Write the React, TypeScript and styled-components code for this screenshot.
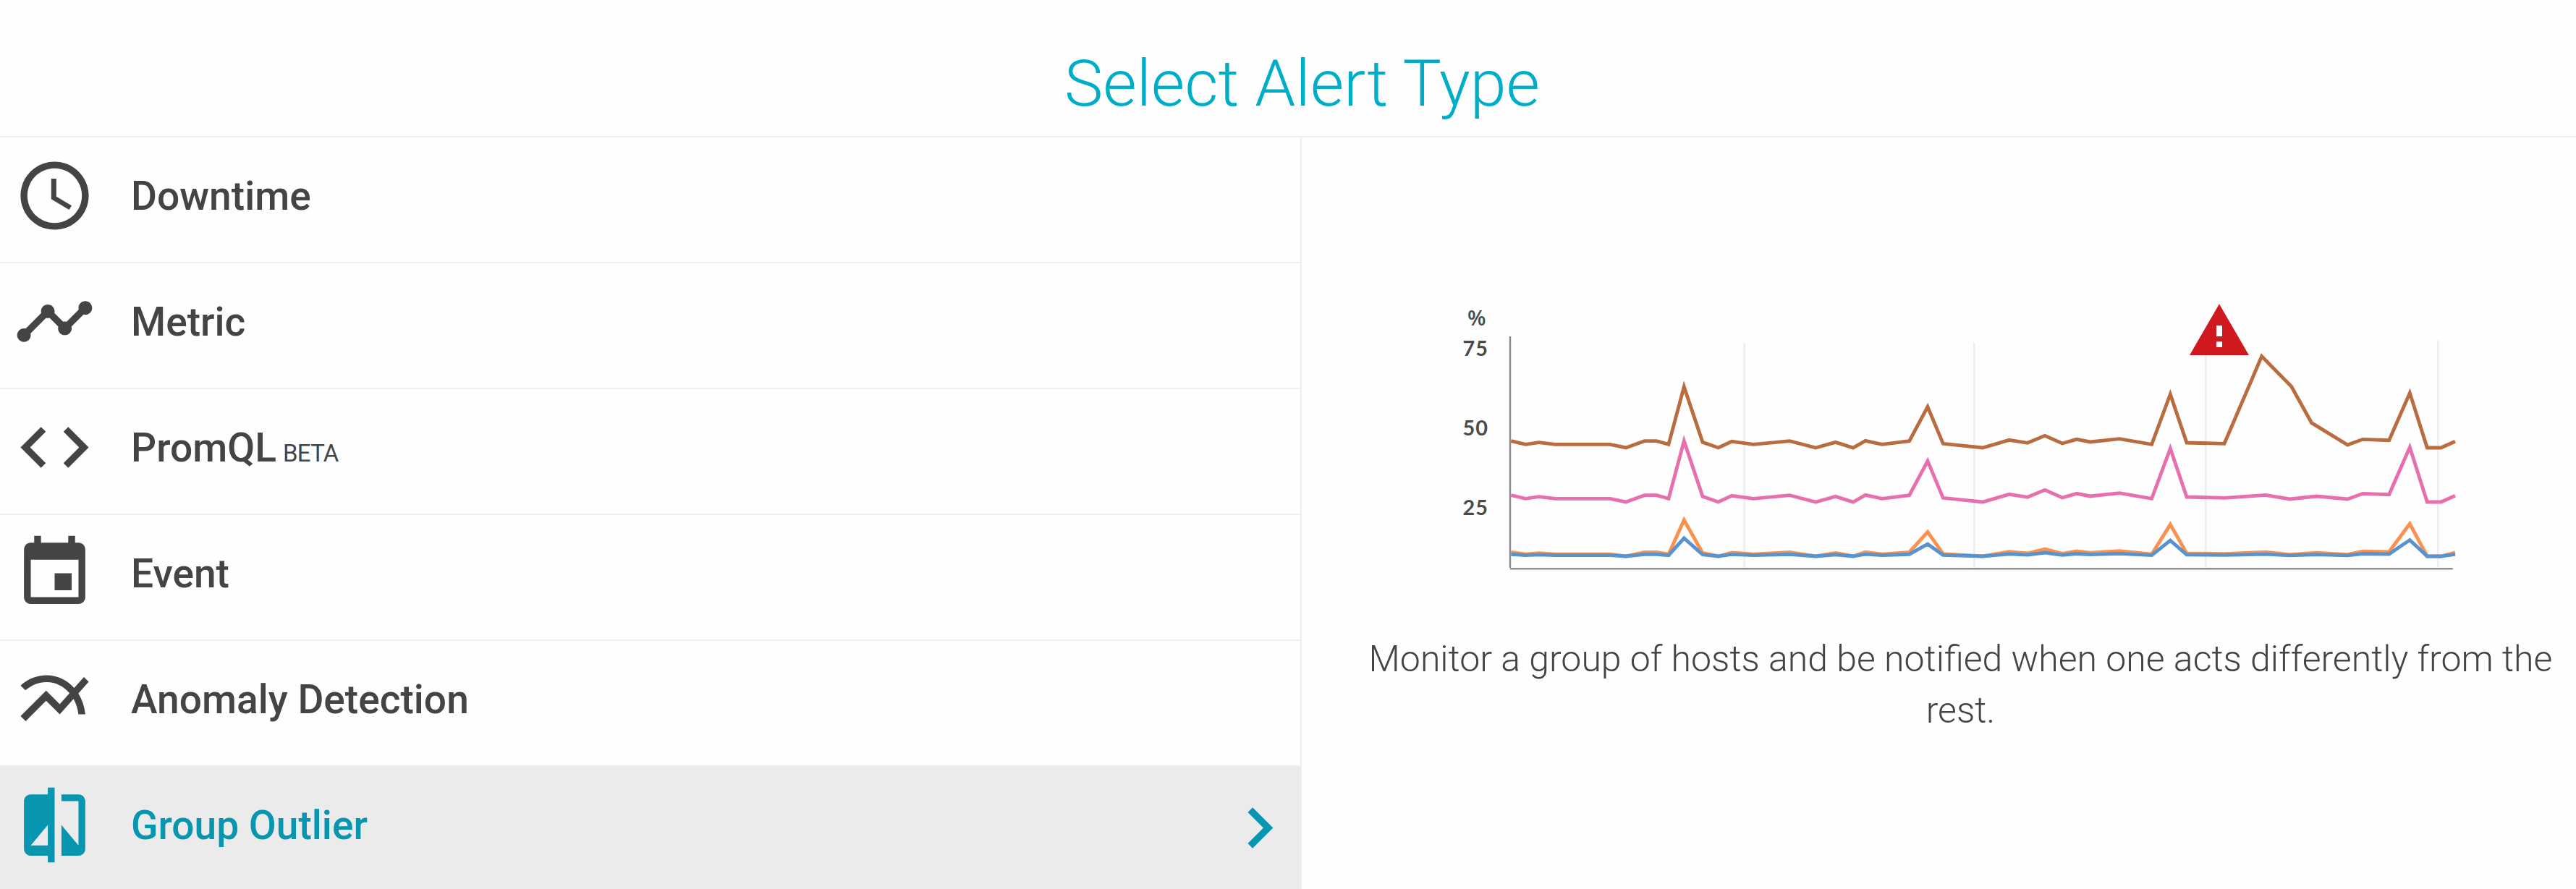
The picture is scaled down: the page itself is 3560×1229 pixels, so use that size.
import React from "react";
import styled, { createGlobalStyle } from "styled-components";

const GlobalStyle = createGlobalStyle`
  body {
    margin: 0;
    background: #fefefe;
    font-family: Roboto, "Liberation Sans", sans-serif;
    color: #434445;
  }
`;

const Page = styled.main`
  display: flex;
  flex-direction: column;
  width: 3560px;
  height: 1229px;
  overflow: hidden;
`;

const Header = styled.header`
  box-sizing: border-box;
  height: 190px;
  padding: 63px 0 0 39px;
  border-bottom: 2px solid #eeeeee;
`;

const Title = styled.h1`
  margin: 0;
  font-size: 89.8px;
  font-weight: 300;
  line-height: 106px;
  text-align: center;
  color: #00adc9;
`;

const Columns = styled.div`
  display: grid;
  grid-template-columns: 1799px 1fr;
  height: 1039px;
`;

const TypeList = styled.ul`
  margin: 0;
  padding: 0;
  list-style: none;
  border-right: 2px solid #eeeeee;
`;

const TypeItem = styled.li<{ $selected: boolean }>`
  box-sizing: border-box;
  display: flex;
  align-items: flex-start;
  height: 174px;
  padding: 24px 0 0 19px;
  border-bottom: 2px solid #eeeeee;
  background: ${(p) => (p.$selected ? "#ebebeb" : "transparent")};
  color: ${(p) => (p.$selected ? "#0795b0" : "inherit")};
`;

const Icon = styled.svg`
  flex: none;
  width: 113px;
  height: 113px;
  fill: currentColor;
`;

const Chevron = styled(Icon)`
  margin: 4px 0 0 auto;
`;

const Label = styled.span`
  margin-left: 49px;
  font-size: 55.1px;
  font-weight: 500;
  line-height: 115px;
  white-space: nowrap;
`;

const Beta = styled.small`
  margin-left: 9px;
  font-size: 33px;
  font-weight: 450;
  letter-spacing: -0.7px;
`;

const Preview = styled.section`
  display: flex;
  flex-direction: column;
  padding: 210px 19px 0 79px;
`;

const Chart = styled.svg`
  display: block;
  width: 1420px;
  height: 400px;
  margin-left: 102px;
`;

const Description = styled.p`
  margin: 76px 0 0;
  font-size: 50px;
  font-weight: 300;
  line-height: 71px;
  text-align: center;
`;

const AxisLabel = styled.text`
  font-family: Lato, sans-serif;
  font-size: 28.8px;
  font-weight: 700;
  letter-spacing: 1px;
  fill: #4a4b4c;
  text-anchor: end;
`;

const UnitLabel = styled.text`
  font-family: "Open Sans", sans-serif;
  font-size: 29.5px;
  font-weight: 600;
  fill: #4a4b4c;
`;

const alertTypes = [
  {
    name: "Downtime",
    icon: "M11.99 2C6.47 2 2 6.48 2 12s4.47 10 9.99 10C17.52 22 22 17.52 22 12S17.52 2 11.99 2zM12 20c-4.42 0-8-3.58-8-8s3.58-8 8-8 8 3.58 8 8-3.58 8-8 8zm.5-13H11v6l5.25 3.15.75-1.23-4.5-2.67z",
  },
  {
    name: "Metric",
    icon: "M23 8c0 1.1-.9 2-2 2-.18 0-.35-.02-.51-.07l-3.56 3.55c.05.16.07.34.07.52 0 1.1-.9 2-2 2s-2-.9-2-2c0-.18.02-.36.07-.52l-2.55-2.55c-.16.05-.34.07-.52.07s-.36-.02-.52-.07l-4.55 4.56c.05.16.07.33.07.51 0 1.1-.9 2-2 2s-2-.9-2-2 .9-2 2-2c.18 0 .35.02.51.07l4.56-4.55C8.02 9.36 8 9.18 8 9c0-1.1.9-2 2-2s2 .9 2 2c0 .18-.02.36-.07.52l2.55 2.55c.16-.05.34-.07.52-.07s.36.02.52.07l3.55-3.56C19.02 8.35 19 8.18 19 8c0-1.1.9-2 2-2s2 .9 2 2z",
  },
  {
    name: "PromQL",
    beta: true,
    icon: "M9.4 16.6L4.8 12l4.6-4.6L8 6l-6 6 6 6 1.4-1.4zm5.2 0l4.6-4.6-4.6-4.6L16 6l6 6-6 6-1.4-1.4z",
  },
  {
    name: "Event",
    icon: "M17 12h-5v5h5v-5zM16 1v2H8V1H6v2H5c-1.11 0-1.99.9-1.99 2L3 19c0 1.1.89 2 2 2h14c1.1 0 2-.9 2-2V5c0-1.1-.9-2-2-2h-1V1h-2zm3 18H5V8h14v11z",
  },
  {
    name: "Anomaly Detection",
    icon: "M22 6.92l-1.41-1.41-2.85 3.21C15.68 6.4 12.83 5 9.61 5 6.72 5 4.07 6.16 2 8l1.42 1.42C5.12 7.93 7.27 7 9.61 7c2.74 0 5.09 1.26 6.77 3.24l-2.88 3.24-4-4L2 16.99l1.5 1.5 6-6.01 4 4 4.05-4.55c.75 1.35 1.25 2.9 1.44 4.55H21c-.22-2.3-.95-4.39-2.04-6.14L22 6.92z",
  },
  {
    name: "Group Outlier",
    selected: true,
    icon: "M10 3H5c-1.1 0-2 .9-2 2v14c0 1.1.9 2 2 2h5v2h2V1h-2v2zm0 15H5l5-6v6zm9-15h-5v2h5v13l-5-6v9h5c1.1 0 2-.9 2-2V5c0-1.1-.9-2-2-2z",
  },
];

type Point = [number, number];

// Host load samples in chart units (one third of a pixel).
const lead: Point[] = [
  [325, 629], [385, 643], [440, 635], [508, 643], [735, 643], [801, 657],
  [878, 629], [928, 629], [978, 643], [1042, 404], [1119, 634], [1184, 657],
  [1240, 631], [1330, 643], [1480, 629], [1588, 657], [1670, 634], [1743, 657],
  [1794, 628], [1863, 643], [1976, 629], [2052, 487], [2116, 640], [2280, 657],
  [2390, 625], [2466, 637], [2538, 607], [2610, 639], [2670, 622], [2726, 633],
  [2847, 620], [2981, 643], [3058, 435], [3126, 636],
];
const usual: Point[] = [[3284, 640], [3453, 628], [3553, 645], [3665, 633]];
const outlier: Point[] = [[3282, 640], [3437, 278], [3560, 403], [3644, 554]];
const tail: Point[] = [
  [3793, 645], [3856, 622], [3965, 626], [4051, 430], [4123, 657],
  [4180, 657], [4239, 631],
];
const normal = [...lead, ...usual, ...tail];

const scaled = (factor: number): Point[] =>
  normal.map(([x, y]) => [x, 1107 - factor * (657 - y)]);

const series = [
  { color: "#b96c3f", points: [...lead, ...outlier, ...tail] },
  { color: "#e86fae", points: normal.map(([x, y]): Point => [x, y + 225]) },
  { color: "#f9924f", points: scaled(0.593) },
  { color: "#5892cf", points: scaled(0.296) },
];

const OutlierChart = () => (
  <Chart viewBox="1980 400 1420 400">
    <g stroke="#eeeeee" strokeWidth="2.6">
      <path d="M2410.7 474V785M2728.3 474V785M3048.3 474V785M3369.3 471V784" />
    </g>
    <path d="M2087 465V785" stroke="#8a8a8a" strokeWidth="2.4" />
    <path d="M2087 786.3H3389.7" stroke="#8f8f8f" strokeWidth="2.6" />
    <UnitLabel x="2028" y="450">%</UnitLabel>
    <AxisLabel x="2057" y="491.7">75</AxisLabel>
    <AxisLabel x="2057" y="601.7">50</AxisLabel>
    <AxisLabel x="2057" y="711.7">25</AxisLabel>
    <g transform="translate(1980 400) scale(0.33333)" fill="none" strokeWidth="14.6" strokeMiterlimit="10">
      {series.map((s) => (
        <polyline key={s.color} stroke={s.color} points={s.points.map((p) => p.join(",")).join(" ")} />
      ))}
    </g>
    <path d="M3067 420.3L3108 491H3026z" fill="#cf191f" />
    <path d="M3063 450h8v15h-8zM3063 472.2h8v7.8h-8z" fill="#ffffff" />
  </Chart>
);

export default function App() {
  return (
    <Page>
      <GlobalStyle />
      <Header>
        <Title>Select Alert Type</Title>
      </Header>
      <Columns>
        <TypeList>
          {alertTypes.map((type) => (
            <TypeItem key={type.name} $selected={!!type.selected}>
              <Icon viewBox="0 0 24 24">
                <path d={type.icon} />
              </Icon>
              <Label>
                {type.name}
                {type.beta && <Beta>BETA</Beta>}
              </Label>
              {type.selected && (
                <Chevron viewBox="0 0 24 24">
                  <path d="M10 6L8.59 7.41 13.17 12l-4.58 4.59L10 18l6-6z" />
                </Chevron>
              )}
            </TypeItem>
          ))}
        </TypeList>
        <Preview>
          <OutlierChart />
          <Description>
            Monitor a group of hosts and be notified when one acts differently from the rest.
          </Description>
        </Preview>
      </Columns>
    </Page>
  );
}
